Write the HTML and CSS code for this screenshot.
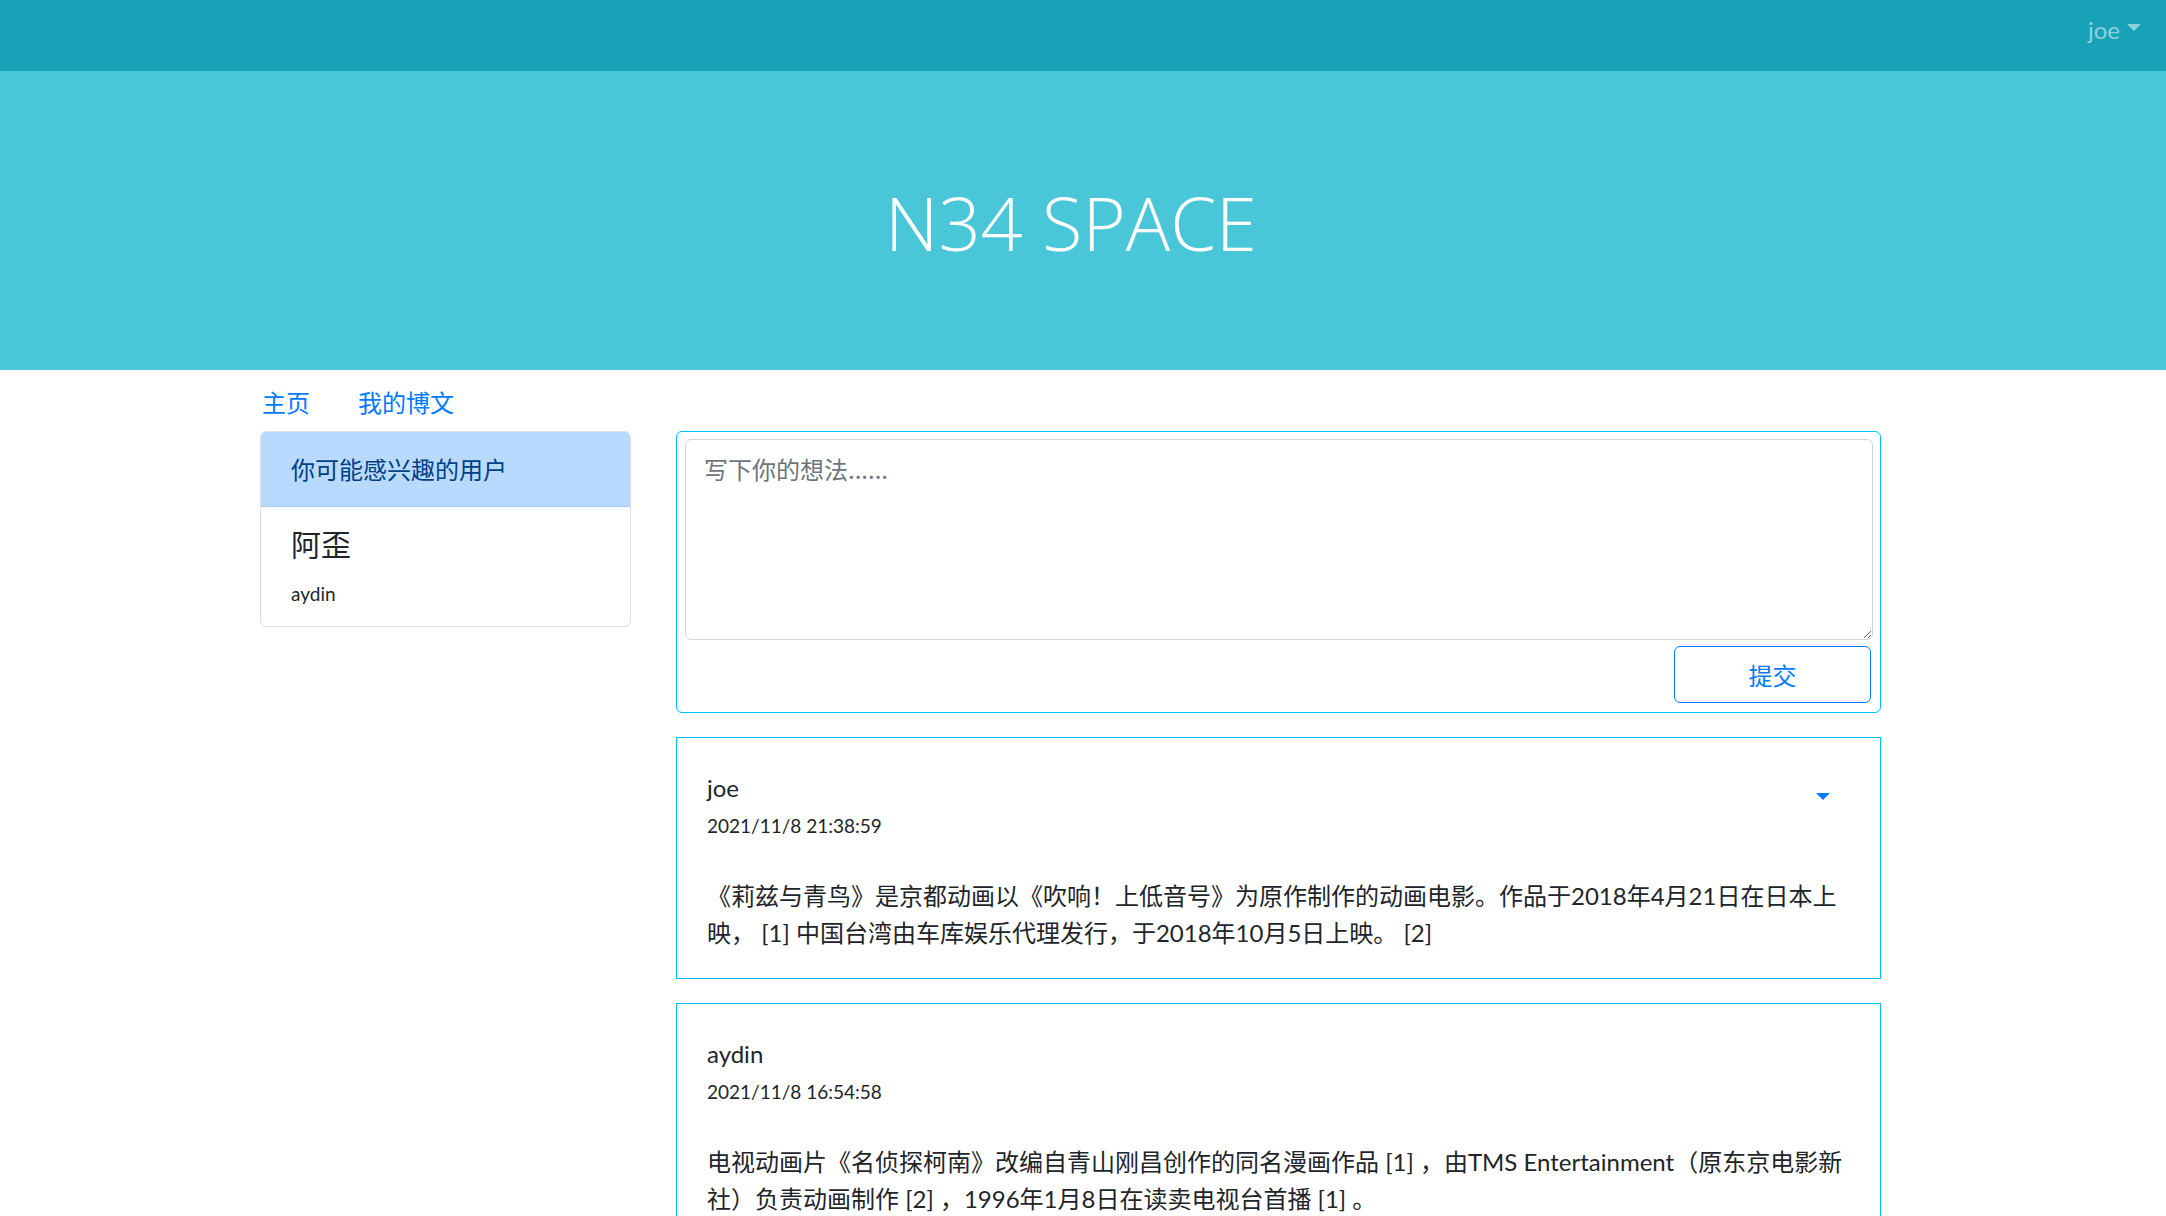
FILE: index.html
```html
<!DOCTYPE html>
<html lang="zh-CN">
<head>
<meta charset="utf-8">
<title>N34 SPACE</title>
<link rel="stylesheet" href="styles.css">
</head>
<body>
<header class="navbar">
  <div class="user-menu">joe<span class="caret caret-light"></span></div>
</header>
<section class="jumbotron">
  <h1 class="title">N34 SPACE</h1>
</section>
<main class="page">
  <nav class="tabs">
    <a class="tab" href="#">主页</a>
    <a class="tab" href="#">我的博文</a>
  </nav>
  <div class="columns">
    <aside class="side">
      <div class="list">
        <div class="list-head">你可能感兴趣的用户</div>
        <div class="list-item">
          <div class="user-name">阿歪</div>
          <div class="user-id">aydin</div>
        </div>
      </div>
    </aside>
    <section class="feed">
      <form class="composer">
        <textarea class="composer-input" placeholder="写下你的想法......"></textarea>
        <div class="composer-actions">
          <button type="button" class="btn-submit">提交</button>
        </div>
      </form>
      <article class="post">
        <div class="post-head">
          <div class="post-author">joe</div>
          <span class="caret caret-blue"></span>
        </div>
        <div class="post-date">2021/11/8 21:38:59</div>
        <p class="post-body">《莉兹与青鸟》是京都动画以《吹响！上低音号》为原作制作的动画电影。作品于2018年4月21日在日本上映， [1] 中国台湾由车库娱乐代理发行，于2018年10月5日上映。 [2]</p>
      </article>
      <article class="post">
        <div class="post-head">
          <div class="post-author">aydin</div>
        </div>
        <div class="post-date">2021/11/8 16:54:58</div>
        <p class="post-body">电视动画片《名侦探柯南》改编自青山刚昌创作的同名漫画作品 [1] ，由TMS Entertainment（原东京电影新社）负责动画制作 [2] ，1996年1月8日在读卖电视台首播 [1] 。</p>
      </article>
    </section>
  </div>
</main>
</body>
</html>
```
FILE: styles.css
```css
* { box-sizing: border-box; }
html, body { margin: 0; padding: 0; }
body {
  font-family: "Lato", "Noto Sans CJK SC", sans-serif;
  font-size: 24px;
  line-height: 1.5;
  color: #212529;
  background: #fff;
  overflow: hidden;
}
.navbar {
  height: 71px;
  background: #17a2b8;
  display: flex;
  justify-content: flex-end;
  align-items: flex-start;
  padding: 12px 25px 0 0;
}
.user-menu {
  color: rgba(255,255,255,0.5);
  display: flex;
  align-items: center;
  line-height: 36px;
}
.caret {
  display: inline-block;
  width: 0;
  height: 0;
  border-top: 7px solid currentColor;
  border-left: 7px solid transparent;
  border-right: 7px solid transparent;
}
.caret-light { margin-left: 7px; margin-top: -6px; }
.jumbotron {
  height: 299px;
  background: #4ac6d9;
  display: flex;
  align-items: center;
  justify-content: center;
}
.title {
  margin: 0 0 0 -24px;
  font-family: "Open Sans", sans-serif;
  font-size: 74px;
  font-weight: 300;
  color: #fff;
  line-height: 1.2;
  padding-top: 6px;
}
.page {
  padding-left: 260px;
}
.tabs {
  display: flex;
  gap: 48px;
  height: 36px;
  margin: 14px 0 11px 2px;
}
.tab {
  color: #007bff;
  text-decoration: none;
  font-family: "Noto Sans CJK SC", sans-serif;
}
.columns {
  display: flex;
  gap: 45px;
  align-items: flex-start;
}
.side { width: 371px; flex: none; }
.list {
  border: 1px solid rgba(0,0,0,0.125);
  border-radius: 6px;
  overflow: hidden;
}
.list-head {
  background: #b8daff;
  color: #004085;
  padding: 18px 30px;
  line-height: 38px;
  border-bottom: 1px solid #9fcdff;
  font-family: "Noto Sans CJK SC", sans-serif;
}
.list-item {
  padding: 18px 30px 18px;
}
.user-name {
  font-size: 30px;
  line-height: 36px;
  margin-bottom: 18px;
  font-family: "Noto Sans CJK SC", sans-serif;
}
.user-id {
  font-size: 19px;
  line-height: 29px;
}
.feed {
  width: 1205px;
  flex: none;
  display: flex;
  flex-direction: column;
  gap: 24px;
}
.composer {
  margin: 0;
  border: 1px solid #00bfff;
  border-radius: 6px;
  padding: 7px 7px 9px 8px;
}
.composer-input {
  display: block;
  width: 100%;
  height: 201px;
  border: 1px solid #ced4da;
  border-radius: 6px;
  padding: 11px 18px 7px;
  font: inherit;
  font-family: "Noto Sans CJK SC", sans-serif;
  line-height: 36px;
  color: #495057;
  resize: vertical;
}
.composer-input::placeholder { color: #6c757d; }
.composer-actions {
  display: flex;
  justify-content: flex-end;
  margin-top: 6px;
  padding-right: 2px;
}
.btn-submit {
  width: 197px;
  height: 57px;
  border: 1px solid #007bff;
  border-radius: 6px;
  background: #fff;
  color: #007bff;
  font: inherit;
  font-family: "Noto Sans CJK SC", sans-serif;
  line-height: 36px;
  padding-top: 2px;
}
.post {
  border: 1px solid #00bfff;
  padding: 32px 30px 27px;
}
.post-head {
  display: flex;
  align-items: center;
  justify-content: space-between;
  height: 36px;
}
.post-author { line-height: 36px; }
.caret-blue {
  color: #007bff;
  margin-right: 20px;
  margin-top: 16px;
}
.post-date {
  font-size: 19px;
  line-height: 29px;
  margin-top: 5px;
}
.post-body {
  margin: 37px 0 0;
  line-height: 37px;
}
```
